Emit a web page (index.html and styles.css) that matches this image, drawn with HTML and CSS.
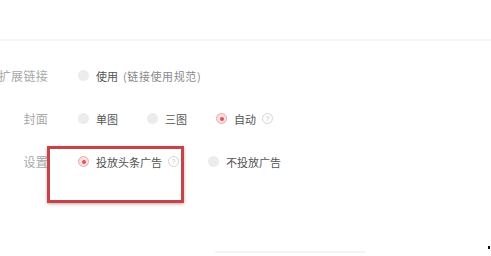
FILE: index.html
```html
<!DOCTYPE html>
<html lang="zh">
<head>
<meta charset="utf-8">
<link rel="stylesheet" href="styles.css">
</head>
<body>
<div class="page">
  <div class="divider"></div>
  <div class="form">
    <div class="row">
      <div class="label"><span>扩展链接</span></div>
      <div class="options">
        <label class="opt"><span class="radio"></span><span class="txt">使用</span><span class="note">(链接使用规范)</span></label>
      </div>
    </div>
    <div class="row">
      <div class="label"><span>封面</span></div>
      <div class="options">
        <label class="opt"><span class="radio"></span><span class="txt">单图</span></label>
        <label class="opt"><span class="radio"></span><span class="txt">三图</span></label>
        <label class="opt"><span class="radio checked"></span><span class="txt">自动</span><span class="help">?</span></label>
      </div>
    </div>
    <div class="row">
      <div class="label"><span>设置</span></div>
      <div class="options">
        <label class="opt"><span class="radio checked"></span><span class="txt">投放头条广告</span><span class="help">?</span></label>
        <label class="opt"><span class="radio"></span><span class="txt">不投放广告</span></label>
      </div>
    </div>
  </div>
  <div class="footer"><div class="faint-line"></div></div>
  <div class="highlight"></div>
  <div class="dot"></div>
</div>
</body>
</html>
```
FILE: styles.css
```css
html, body {
  margin: 0;
  padding: 0;
  background: #ffffff;
}
body {
  font-family: "Noto Sans CJK SC", "Noto Sans", sans-serif;
  width: 491px;
  height: 256px;
  overflow: hidden;
}
.page {
  position: relative;
  width: 491px;
  height: 256px;
  padding-top: 39px;
  box-sizing: border-box;
}
.divider {
  height: 2px;
  background: #f4f4f4;
}
.form {
  margin-top: 13px;
  display: flex;
  flex-direction: column;
}
.row {
  height: 43px;
  display: flex;
  align-items: center;
  gap: 30px;
}
.label {
  width: 48px;
  flex: none;
  display: flex;
  justify-content: flex-end;
  font-size: 12px;
  color: #a8a8a8;
  white-space: nowrap;
  letter-spacing: 0.3px;
}
.options {
  display: flex;
  align-items: center;
  gap: 29px;
}
.opt {
  display: flex;
  align-items: center;
  font-size: 11px;
  color: #555555;
  white-space: nowrap;
}
.radio {
  width: 11px;
  height: 11px;
  border-radius: 50%;
  background: #ececec;
  box-sizing: border-box;
  margin-right: 7px;
  flex: none;
  position: relative;
}
.radio.checked {
  background: #fbe0e1;
  border: 1px solid #eea9ad;
}
.radio.checked::after {
  content: "";
  position: absolute;
  left: 2.5px;
  top: 2.5px;
  width: 4px;
  height: 4px;
  border-radius: 50%;
  background: #e0525a;
}
.note {
  color: #8a8a8a;
  margin-left: 5px;
  letter-spacing: 0.6px;
}
.help {
  width: 9px;
  height: 9px;
  border: 1px solid #d4d4d4;
  border-radius: 50%;
  font-size: 7px;
  line-height: 9px;
  text-align: center;
  color: #c4c4c4;
  margin-left: 6px;
  font-family: "Liberation Sans", sans-serif;
}
.footer {
  margin-top: 68px;
  padding-left: 215px;
}
.faint-line {
  width: 150px;
  height: 2px;
  background: #f4f4f4;
}
.highlight {
  position: absolute;
  left: 47px;
  top: 146px;
  width: 137px;
  height: 57px;
  box-sizing: border-box;
  border: 3px solid #c6434a;
  box-shadow: 0 1px 3px rgba(80, 0, 0, 0.35);
}
.dot {
  position: absolute;
  left: 488px;
  top: 246px;
  width: 2px;
  height: 3px;
  background: #111;
}
```
